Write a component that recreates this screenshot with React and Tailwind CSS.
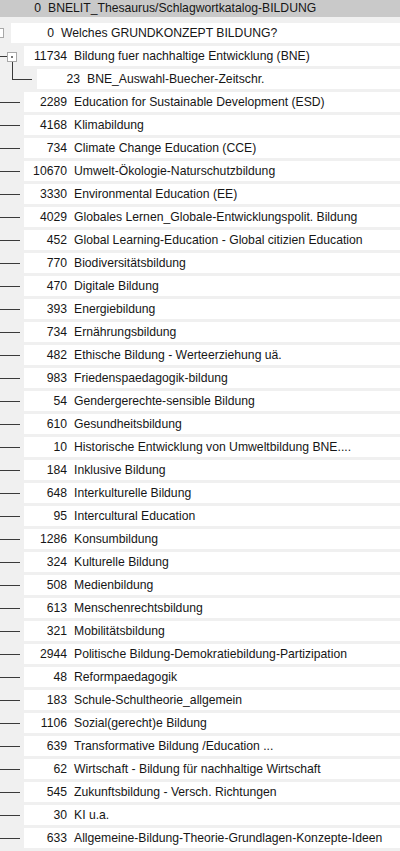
import React from "react";

const items = [
  ["2289", "Education for Sustainable Development (ESD)"],
  ["4168", "Klimabildung"],
  ["734", "Climate Change Education (CCE)"],
  ["10670", "Umwelt-Ökologie-Naturschutzbildung"],
  ["3330", "Environmental Education (EE)"],
  ["4029", "Globales Lernen_Globale-Entwicklungspolit. Bildung"],
  ["452", "Global Learning-Education - Global citizien Education"],
  ["770", "Biodiversitätsbildung"],
  ["470", "Digitale Bildung"],
  ["393", "Energiebildung"],
  ["734", "Ernährungsbildung"],
  ["482", "Ethische Bildung - Werteerziehung uä."],
  ["983", "Friedenspaedagogik-bildung"],
  ["54", "Gendergerechte-sensible Bildung"],
  ["610", "Gesundheitsbildung"],
  ["10", "Historische Entwicklung von Umweltbildung BNE...."],
  ["184", "Inklusive Bildung"],
  ["648", "Interkulturelle Bildung"],
  ["95", "Intercultural Education"],
  ["1286", "Konsumbildung"],
  ["324", "Kulturelle Bildung"],
  ["508", "Medienbildung"],
  ["613", "Menschenrechtsbildung"],
  ["321", "Mobilitätsbildung"],
  ["2944", "Politische Bildung-Demokratiebildung-Partizipation"],
  ["48", "Reformpaedagogik"],
  ["183", "Schule-Schultheorie_allgemein"],
  ["1106", "Sozial(gerecht)e Bildung"],
  ["639", "Transformative Bildung /Education ..."],
  ["62", "Wirtschaft - Bildung für nachhaltige Wirtschaft"],
  ["545", "Zukunftsbildung - Versch. Richtungen"],
  ["30", "KI u.a."],
  ["633", "Allgemeine-Bildung-Theorie-Grundlagen-Konzepte-Ideen"],
];

const LINE = "#3a3a3a";

function Cell({ num, label }) {
  return (
    <div className="flex-1 bg-white flex items-center h-full min-w-0">
      <span className="w-[43px] text-right shrink-0">{num}</span>
      <span className="pl-[7px] whitespace-nowrap">{label}</span>
    </div>
  );
}

function Row({ gutter, num, label, children }) {
  return (
    <div className="flex h-[20px]">
      <div className="shrink-0 h-full relative" style={{ width: gutter }}>
        <svg
          width={gutter}
          height="20"
          className="absolute left-0 top-0 overflow-visible"
        >
          {children}
        </svg>
      </div>
      <Cell num={num} label={label} />
    </div>
  );
}

export default function App() {
  return (
    <div className="w-[400px] h-[851px] bg-[#f0f0f0] overflow-hidden font-['Liberation_Sans',Arial,sans-serif] text-[12.2px] leading-none text-[#161616]">
      <div className="h-[17px] bg-[#c9c9c9] flex items-center">
        <span className="w-[41px] text-right shrink-0">0</span>
        <span className="pl-[7px] whitespace-nowrap">
          BNELIT_Thesaurus/Schlagwortkatalog-BILDUNG
        </span>
      </div>
      <div className="flex flex-col gap-[3px] pt-[6px]">
        <Row gutter={11} num="0" label="Welches GRUNDKONZEPT BILDUNG?">
          <rect x="-5.5" y="5.5" width="9" height="9" fill="#fff" stroke="#a8a8a8" />
        </Row>
        <Row gutter={24} num="11734" label="Bildung fuer nachhaltige Entwicklung (BNE)">
          <line x1="0" y1="10.5" x2="7" y2="10.5" stroke={LINE} />
          <rect x="7.5" y="6.5" width="9" height="9" fill="#fff" stroke="#a8a8a8" />
          <rect x="11" y="10" width="2" height="2" fill="#777" />
        </Row>
        <Row gutter={37} num="23" label="BNE_Auswahl-Buecher-Zeitschr.">
          <line x1="12.5" y1="-7" x2="12.5" y2="10.5" stroke={LINE} />
          <line x1="12" y1="10.5" x2="32" y2="10.5" stroke={LINE} />
        </Row>
        {items.map(([n, l], i) => (
          <Row key={i} gutter={24} num={n} label={l}>
            <line x1="0" y1="10.5" x2="20" y2="10.5" stroke={LINE} />
          </Row>
        ))}
      </div>
    </div>
  );
}
